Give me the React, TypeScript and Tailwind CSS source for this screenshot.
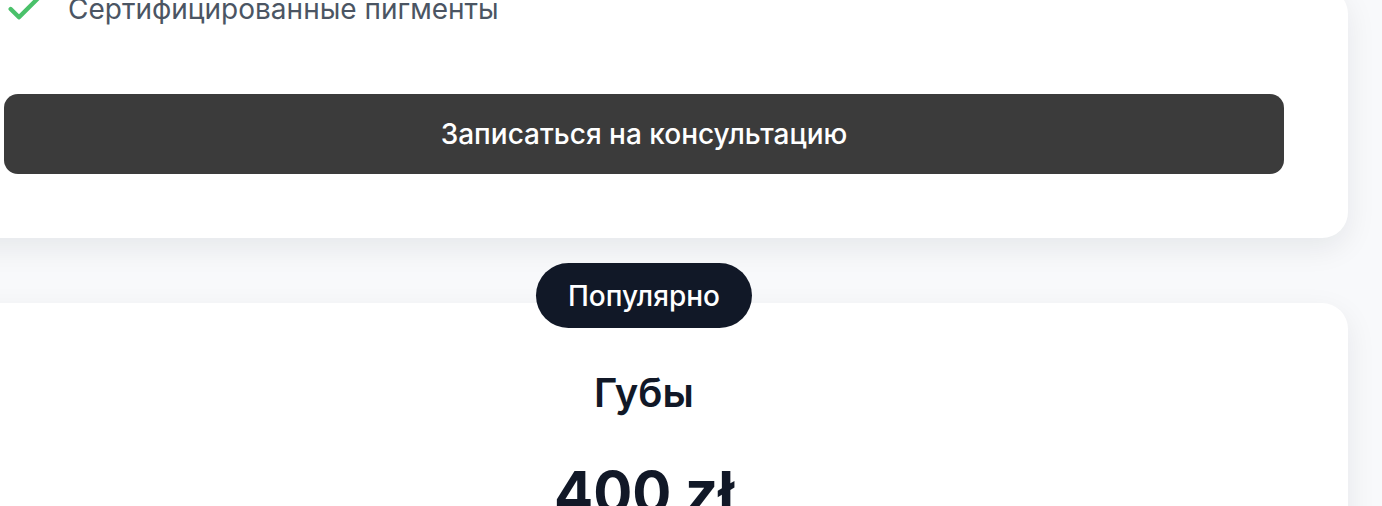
import { Check } from 'lucide-react';

export default function App() {
  const features = ['Сертифицированные пигменты'];

  return (
    <div className="min-h-screen overflow-hidden bg-[#f8f9fb] font-['Inter','Noto_Sans',sans-serif]">
      <div className="ml-[-60px] w-[1408px] flex flex-col gap-[65px]">
        {/* previous plan, scrolled mostly out of view */}
        <div className="mt-[-12px] bg-white rounded-[26px] shadow-[0_10px_30px_rgba(17,24,39,0.08)] px-16 pb-16">
          <ul className="flex flex-col gap-4">
            {features.map((f) => (
              <li key={f} className="flex items-center gap-6">
                <Check className="w-10 h-10 text-[#4ac16a] shrink-0" strokeWidth={2.6} />
                <span className="text-[28px] leading-[42px] text-[#4b5563]">{f}</span>
              </li>
            ))}
          </ul>
          <button className="mt-16 w-full h-20 rounded-[14px] bg-[#3b3b3b] text-white text-[28px] leading-[42px] font-medium">
            Записаться на консультацию
          </button>
        </div>

        {/* popular plan */}
        <div className="relative bg-white rounded-[26px] shadow-[0_10px_30px_rgba(17,24,39,0.08)] px-16 pt-[62px] pb-16 flex flex-col items-center">
          <span className="absolute top-[-40px] left-1/2 -translate-x-1/2 h-[65px] px-8 flex items-center rounded-full bg-[#111827] text-white text-[28px] leading-[42px] font-medium">
            Популярно
          </span>
          <h3 className="text-[40px] leading-[56px] font-semibold text-[#111827]">Губы</h3>
          <p className="mt-[36px] text-[58px] leading-[70px] font-bold text-[#111827]">400 zł</p>
          <div className="h-40" />
        </div>
      </div>
    </div>
  );
}
